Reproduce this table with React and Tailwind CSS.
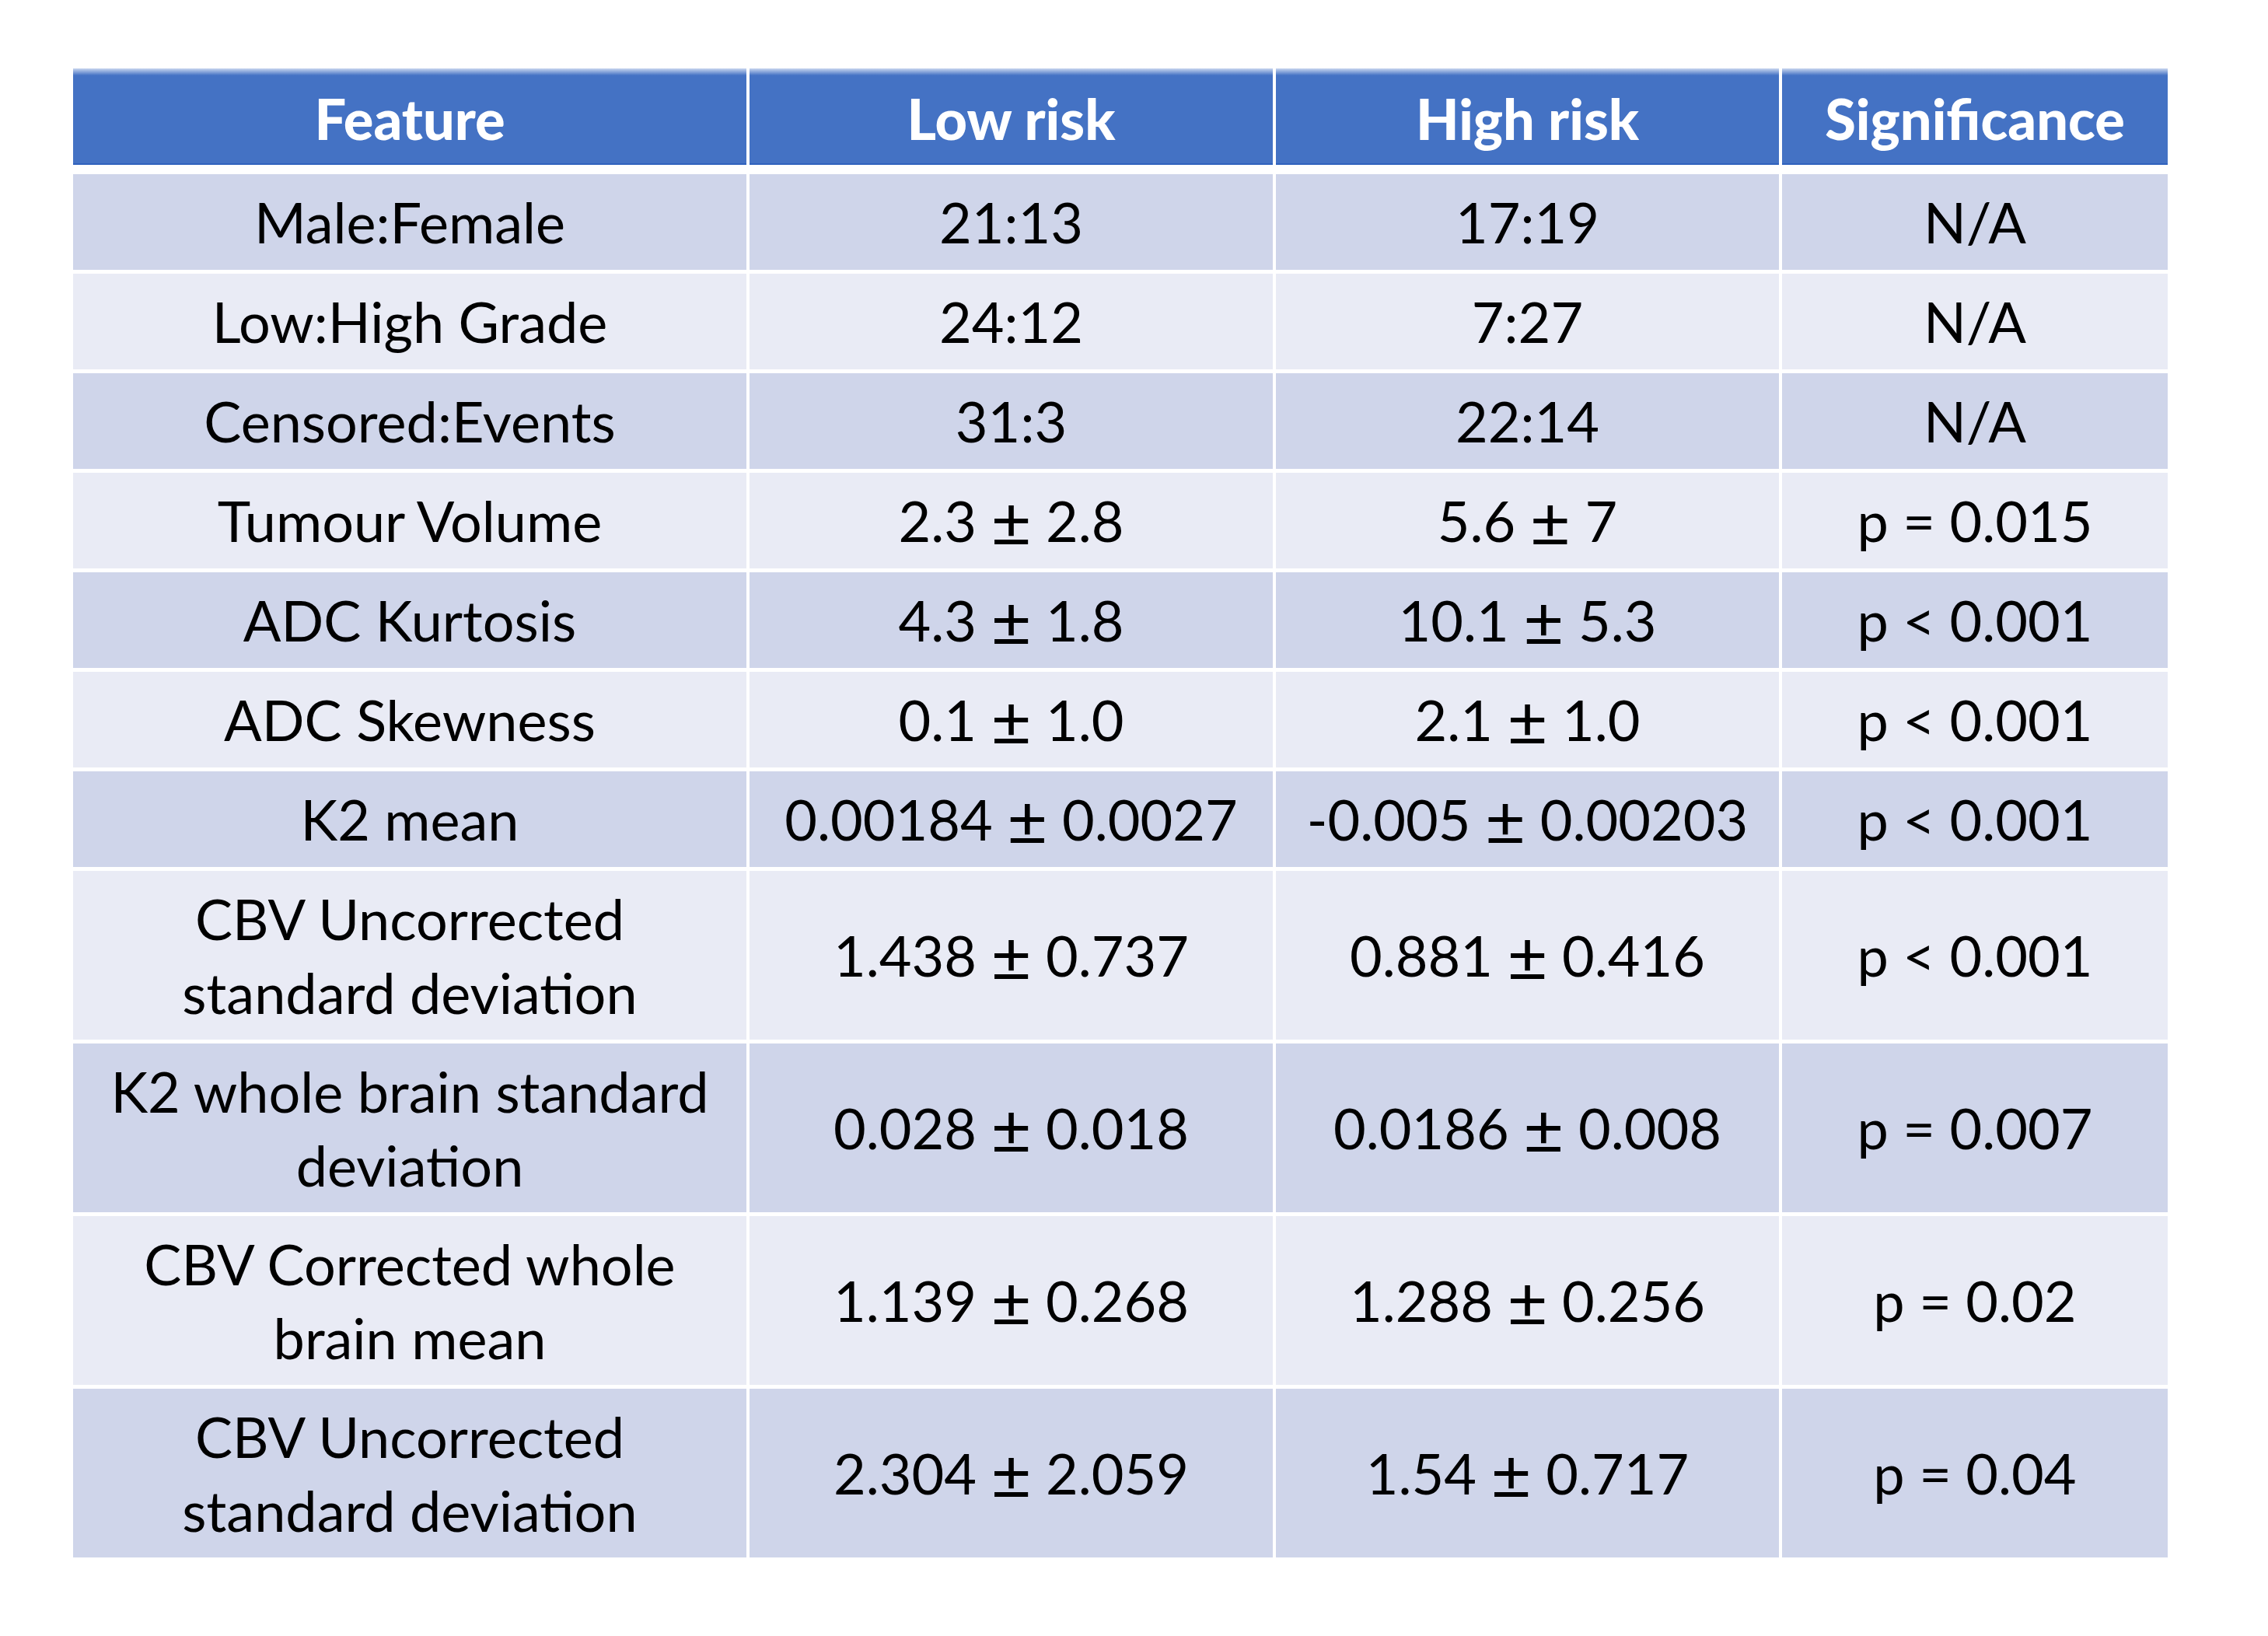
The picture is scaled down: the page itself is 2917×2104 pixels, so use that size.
const rows = [
  { feature: ["Male:Female"], low: "21:13", high: "17:19", sig: "N/A" },
  { feature: ["Low:High Grade"], low: "24:12", high: "7:27", sig: "N/A" },
  { feature: ["Censored:Events"], low: "31:3", high: "22:14", sig: "N/A" },
  { feature: ["Tumour Volume"], low: "2.3 ± 2.8", high: "5.6 ± 7", sig: "p = 0.015" },
  { feature: ["ADC Kurtosis"], low: "4.3 ± 1.8", high: "10.1 ± 5.3", sig: "p < 0.001" },
  { feature: ["ADC Skewness"], low: "0.1 ± 1.0", high: "2.1 ± 1.0", sig: "p < 0.001" },
  { feature: ["K2 mean"], low: "0.00184 ± 0.0027", high: "-0.005 ± 0.00203", sig: "p < 0.001" },
  {
    feature: ["CBV Uncorrected", "standard deviation"],
    low: "1.438 ± 0.737",
    high: "0.881 ± 0.416",
    sig: "p < 0.001",
  },
  {
    feature: ["K2 whole brain standard", "deviation"],
    low: "0.028 ± 0.018",
    high: "0.0186 ± 0.008",
    sig: "p = 0.007",
  },
  {
    feature: ["CBV Corrected whole", "brain mean"],
    low: "1.139 ± 0.268",
    high: "1.288 ± 0.256",
    sig: "p = 0.02",
  },
  {
    feature: ["CBV Uncorrected", "standard deviation"],
    low: "2.304 ± 2.059",
    high: "1.54 ± 0.717",
    sig: "p = 0.04",
  },
];

const headers = ["Feature", "Low risk", "High risk", "Significance"];

// value with a bigger plus-minus sign, as the slide draws it
const Value = ({ text }) => {
  const parts = text.split(" ± ");
  if (parts.length < 2) return <span>{text}</span>;
  return (
    <span className="whitespace-nowrap">
      {parts[0]} <span className="align-[-7px] text-[90px] leading-none">±</span> {parts[1]}
    </span>
  );
};

export default function App() {
  return (
    <div className="min-h-screen w-full bg-white pt-[88px] pl-[94px] font-['Lato','Open_Sans',sans-serif] text-black">
      <div className="flex w-[2694px] flex-col">
        {/* header */}
        <div className="grid h-[124px] grid-cols-[866px_673px_647px_496px] gap-x-[4px]">
          {headers.map((h) => (
            <div
              key={h}
              className="flex items-center justify-center border-b-2 border-[#2f62bd] bg-[linear-gradient(to_bottom,#c9d6ef_0px,#4472c4_9px,#4472c4_100%)] pt-[6px] text-[72px] font-black text-white"
            >
              {h}
            </div>
          ))}
        </div>

        {/* body */}
        <div className="mt-[12px] flex flex-col gap-y-[5px]">
          {rows.map((r, i) => (
            <div
              key={i}
              className={
                "grid grid-cols-[866px_673px_647px_496px] gap-x-[4px] text-[72px] leading-[95px] " +
                (r.feature.length > 1 ? "h-[217px] " : "h-[123px] ")
              }
            >
              {[0, 1, 2, 3].map((c) => (
                <div key={c} className={i % 2 === 0 ? "flex bg-[#cfd5ea]" : "flex bg-[#e9ebf5]"}>
                  <div className="flex w-full flex-col items-center justify-center text-center">
                    {c === 0 && r.feature.map((line) => <span key={line}>{line}</span>)}
                    {c === 1 && <Value text={r.low} />}
                    {c === 2 && <Value text={r.high} />}
                    {c === 3 && <span>{r.sig}</span>}
                  </div>
                </div>
              ))}
            </div>
          ))}
        </div>
      </div>
    </div>
  );
}
